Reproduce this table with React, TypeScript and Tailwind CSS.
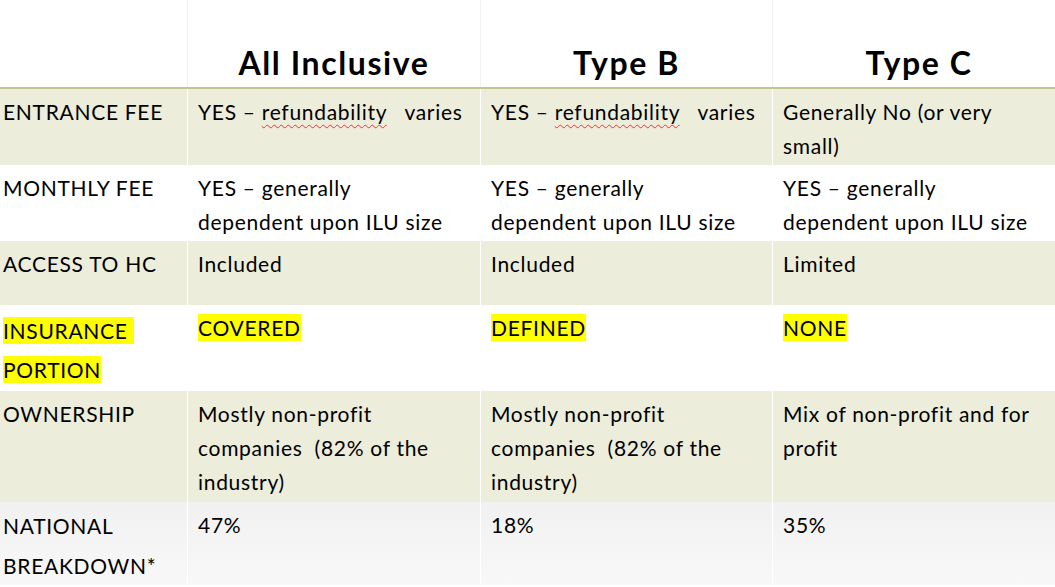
import React from "react";

const squiggle =
  "underline decoration-wavy decoration-red-500 decoration-1 underline-offset-4";

const rows: {
  label: React.ReactNode;
  labelCls?: string;
  cells: React.ReactNode[];
  bg: string;
  h: string;
}[] = [
  {
    label: "ENTRANCE FEE",
    cells: [
      <span className="whitespace-pre">
        YES – <span className={squiggle}>refundability</span>{"   "}varies
      </span>,
      <span className="whitespace-pre">
        YES – <span className={squiggle}>refundability</span>{"   "}varies
      </span>,
      <>Generally No (or very<br />small)</>,
    ],
    bg: "bg-[#ecedda]",
    h: "h-[76px]",
  },
  {
    label: "MONTHLY FEE",
    cells: [
      <>YES – generally<br />dependent upon ILU size</>,
      <>YES – generally<br />dependent upon ILU size</>,
      <>YES – generally<br />dependent upon ILU size</>,
    ],
    bg: "bg-white",
    h: "h-[76px]",
  },
  {
    label: "ACCESS TO HC",
    cells: ["Included", "Included", "Limited"],
    bg: "bg-[#ecedda]",
    h: "h-[64px]",
  },
  {
    label: (
      <>
        <span className="bg-[#ffff00] py-[1px]">INSURANCE </span>
        <br />
        <span className="bg-[#ffff00] py-[1px]">PORTION</span>
      </>
    ),
    labelCls: "leading-[39px] pt-[6px]",
    cells: [
      <span className="bg-[#ffff00] py-[1px]">COVERED</span>,
      <span className="bg-[#ffff00] py-[1px]">DEFINED</span>,
      <span className="bg-[#ffff00] py-[1px]">NONE</span>,
    ],
    bg: "bg-white",
    h: "h-[86px]",
  },
  {
    label: "OWNERSHIP",
    cells: [
      <>Mostly non-profit<br />companies  (82% of the<br />industry)</>,
      <>Mostly non-profit<br />companies  (82% of the<br />industry)</>,
      <>Mix of non-profit and for<br />profit</>,
    ],
    bg: "bg-[#ecedda]",
    h: "h-[111px]",
  },
  {
    label: <>NATIONAL<br />BREAKDOWN*</>,
    labelCls: "leading-[40px] pt-[4px]",
    cells: ["47%", "18%", "35%"],
    bg: "bg-gradient-to-b from-[#f1f1f1] to-[#f8f8f8]",
    h: "h-[83px]",
  },
];

export default function App() {
  return (
    <div
      className="w-[1055px] h-[587px] overflow-hidden bg-white text-black"
      style={{ fontFamily: "Lato, 'Liberation Sans', sans-serif" }}
    >
      <div className="flex h-[89px] border-b-2 border-[#c2c58e] text-[32px] leading-[48px] font-bold tracking-[1.6px]">
        <div className="w-[188px] border-r border-[#f2f2f2]" />
        <div className="w-[293px] border-r border-[#f2f2f2] flex items-end justify-center">
          All Inclusive
        </div>
        <div className="w-[292px] border-r border-[#f2f2f2] flex items-end justify-center">
          Type B
        </div>
        <div className="flex-1 flex items-end justify-center pl-[10px]">
          Type C
        </div>
      </div>
      {rows.map((r, i) => (
        <div
          key={i}
          className={`flex ${r.h} ${r.bg} text-[21px] leading-[34px] tracking-[0.7px] whitespace-pre-wrap`}
        >
          <div className={`w-[188px] shrink-0 border-r border-white pl-[3px] ${r.labelCls ?? "pt-[6px]"}`}>
            {r.label}
          </div>
          <div className="w-[293px] shrink-0 border-r border-white pl-[10px] pt-[6px]">{r.cells[0]}</div>
          <div className="w-[292px] shrink-0 border-r border-white pl-[10px] pt-[6px]">{r.cells[1]}</div>
          <div className="flex-1 pl-[10px] pt-[6px]">{r.cells[2]}</div>
        </div>
      ))}
    </div>
  );
}
